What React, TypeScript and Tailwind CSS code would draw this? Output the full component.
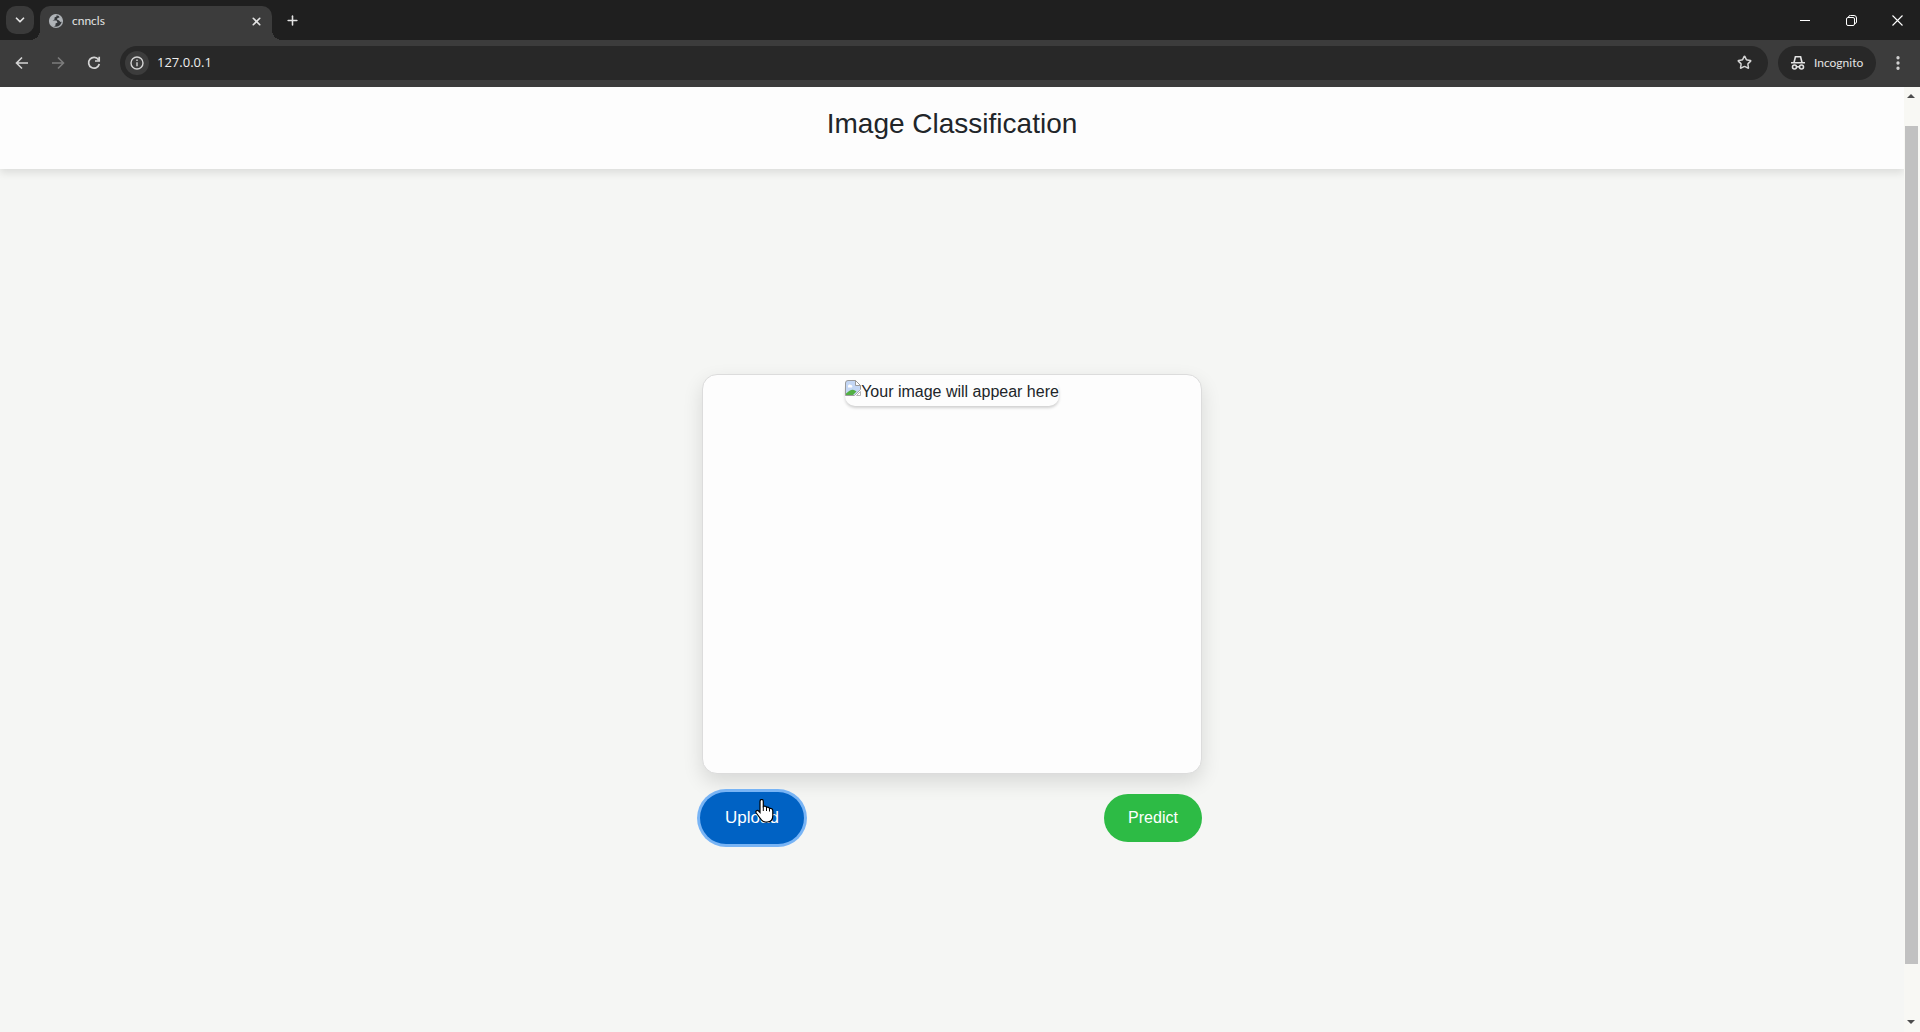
import React from "react";
import { ChevronDown, X, Plus, Star, EllipsisVertical } from "lucide-react";

function TabStrip() {
  return (
    <div className="flex h-10 items-end bg-[#1f1f1f] pl-1.5 text-[#e3e3e3]">
      <button aria-label="Search tabs" className="mb-1.5 grid h-7 w-7 place-items-center rounded-[10px] bg-[#3a3a3a]">
        <ChevronDown size={14} strokeWidth={3} />
      </button>
      <div className="relative ml-1.5 flex h-[34px] w-[232px] items-center rounded-t-[10px] bg-[#3c3c3c] pr-2 pb-1 pl-2">
        <i className="absolute bottom-0 -left-2.5 h-2.5 w-2.5 bg-[radial-gradient(circle_at_0_0,transparent_10px,#3c3c3c_10px)]" />
        <i className="absolute -right-2.5 bottom-0 h-2.5 w-2.5 bg-[radial-gradient(circle_at_100%_0,transparent_10px,#3c3c3c_10px)]" />
        <svg width="16" height="16" viewBox="0 0 16 16" aria-hidden="true">
          <circle cx="8" cy="8" r="6.4" fill="#34373a" stroke="#a9adb1" strokeWidth="1.400" />
          <path d="M1.500 8C1.500 4 4.500 1.500 8.500 1.500V3.500L6.500 4.500V6.500L4.500 7.500H8.500L9.500 9.500 7.500 10.500V12.500L5.500 13.500C3 12.500 1.500 10.500 1.500 8Z" fill="#b0b4b8" />
          <path d="M11 2.500C13.500 4 14.500 6 14.500 8.500L12.500 9 11 7.500 9 6.500 9.500 5 11.500 4.500Z" fill="#b0b4b8" />
        </svg>
        <span className="ml-2 flex-1 font-[Lato,sans-serif] text-xs">cnncls</span>
        <button aria-label="Close tab" className="grid h-4 w-4 place-items-center">
          <X size={13} strokeWidth={3} />
        </button>
      </div>
      <button aria-label="New tab" className="mb-1.5 ml-1.5 grid h-7 w-7 place-items-center">
        <Plus size={15} strokeWidth={2.5} />
      </button>
      <div className="ml-auto flex h-10 items-center">
        <button aria-label="Minimize" className="grid h-10 w-[46px] place-items-center">
          <svg width="10" height="10" viewBox="0 0 10 10" stroke="#fff"><path d="M0 5.5h10" /></svg>
        </button>
        <button aria-label="Restore" className="grid h-10 w-[46px] place-items-center">
          <svg width="11" height="11" viewBox="0 0 11 11" fill="none" stroke="#fff">
            <rect x="0.500" y="2.500" width="8" height="8" rx="1.500" />
            <path d="M2.500 2.500V2Q2.500 .5 4.500 .5H8Q10.500 .5 10.500 3V7Q10.500 8.500 8.500 8.500" />
          </svg>
        </button>
        <button aria-label="Close" className="grid h-10 w-[46px] place-items-center">
          <svg width="11" height="11" viewBox="0 0 11 11" stroke="#fff" strokeWidth="1.100"><path d="M.5.5l10 10M10.500.5l-10 10" /></svg>
        </button>
      </div>
    </div>
  );
}

function Toolbar() {
  return (
    <div className="flex h-[47px] items-center bg-[#3c3c3c] pr-3 pb-0.5 pl-3 text-[#d4d4d4]">
      <button aria-label="Back" className="grid h-5 w-5 place-items-center">
        <svg width="20" height="20" viewBox="0 0 20 20" fill="none" stroke="currentColor" strokeWidth="1.600"><path d="M16 10H5M10 4.500 4.500 10l5.500 5.500" /></svg>
      </button>
      <button aria-label="Forward" className="ml-4 grid h-5 w-5 place-items-center text-[#7c7c7c]">
        <svg width="20" height="20" viewBox="0 0 20 20" fill="none" stroke="currentColor" strokeWidth="1.600"><path d="M4 10h11M10 4.500 15.500 10 10 15.500" /></svg>
      </button>
      <button aria-label="Reload" className="ml-4 grid h-5 w-5 place-items-center">
        <svg width="20" height="20" viewBox="0 0 20 20" fill="none" stroke="currentColor" strokeWidth="1.700"><path d="M14.500 6.700A5.400 5.400 0 1 0 15.300 11M15.200 3.800v4.200H11" /></svg>
      </button>
      <div className="ml-4 flex h-[34px] flex-1 items-center rounded-full bg-[#282828] pr-3.5 pl-[5px]">
        <button aria-label="Site information" className="grid h-6 w-6 place-items-center rounded-full bg-[#3c3c3c]">
          <svg width="14" height="14" viewBox="0 0 14 14" fill="none" stroke="currentColor" strokeWidth="1.400">
            <circle cx="7" cy="7" r="6" /><path d="M7 6.200v4M7 3.600v1.500" />
          </svg>
        </button>
        <input aria-label="Address" defaultValue="127.0.0.1" className="ml-2 min-w-0 flex-1 bg-transparent font-['Open_Sans','Noto_Sans',sans-serif] text-[13px] text-[#ededed] outline-none" />
        <button aria-label="Bookmark this page" className="grid h-5 w-5 place-items-center">
          <Star size={15} strokeWidth={2.4} strokeLinejoin="miter" />
        </button>
      </div>
      <div className="ml-2.5 flex h-[34px] w-[98px] items-center gap-2 rounded-full bg-[#282828] pl-3 text-[#e3e3e3]">
        <svg className="shrink-0" width="16" height="16" viewBox="0 0 16 16" fill="none" stroke="currentColor" strokeWidth="1.600" aria-hidden="true">
          <path d="M1 7.800h14M4 7.500 5.400 1.800h5.200L12 7.500" />
          <circle cx="4.500" cy="12" r="2" /><circle cx="11.500" cy="12" r="2" /><path d="M6.500 11.800h3" />
        </svg>
        <span className="font-[Lato,sans-serif] text-xs">Incognito</span>
      </div>
      <button aria-label="Menu" className="ml-3 grid h-5 w-5 place-items-center">
        <EllipsisVertical size={18} strokeWidth={2.4} />
      </button>
    </div>
  );
}

function BrokenImage() {
  return (
    <svg width="16" height="16" viewBox="0 0 16 16" aria-hidden="true">
      <path d="M.5 3Q.5.500 3 .5H10.500l5 5v4L9.500 15.500H.5Z" fill="#c4d7f5" stroke="#9b9b9b" />
      <path d="M10.500.5v5h5Z" fill="#fff" stroke="#9b9b9b" />
      <path d="M3 6a1.800 1.800 0 0 1 3-1 1.500 1.500 0 0 1 1 2.500H3Z" fill="#fff" />
      <path d="M1 15v-1.500q5-5 8-3.500l2.500 1.500L8 15Z" fill="#52b043" />
      <path d="M16 9.500V16H9.500Z" fill="#fdfdfd" />
      <path d="M15.500 11.500v4h-4Z" fill="#fff" stroke="#b5b5b5" />
    </svg>
  );
}

function HandCursor() {
  return (
    <svg className="pointer-events-none absolute top-[7px] left-[55px]" width="19" height="24" viewBox="0 0 19 24" aria-hidden="true">
      <path d="M5 2.500C5-.2 8.300-.2 8.300 2.500V7.500C10 6.700 11.300 7.500 11.500 8.400 13 7.800 14.300 8.500 14.500 9.500 16.300 9 17.800 10 17.800 12V16.500C17.800 20.500 15.500 23 12 23H10.500C8 23 6.500 21.500 5 19L1.300 14C0 12 2.200 10.500 3.700 12L5 13.500Z" fill="#fff" stroke="#000" strokeWidth="1.200" />
      <path d="M8.300 7.500V12M11.500 8.500V12M14.500 9.500V12.500" stroke="#000" />
    </svg>
  );
}

function Scrollbar() {
  return (
    <div className="flex w-4 shrink-0 flex-col items-center bg-[#f8f8f4] pr-0.5" aria-hidden="true">
      <i className="mt-[7px] border-x-4 border-b-4 border-x-transparent border-b-[#4d4d4d]" />
      <div className="mt-7 mb-14 w-[13px] flex-1 bg-[#c1c1c1]" />
      <i className="mb-2 border-x-4 border-t-4 border-x-transparent border-t-[#4d4d4d]" />
    </div>
  );
}

export default function App() {
  return (
    <div className="flex min-h-screen flex-col font-['Noto_Sans','Open_Sans',sans-serif]">
      <TabStrip />
      <Toolbar />
      <div className="flex flex-1 font-['Liberation_Sans',Arial,sans-serif] text-[#212529]">
        <div className="flex flex-1 flex-col bg-[#f5f6f4]">
          <header className="flex h-[82px] items-start justify-center bg-[#fdfdfd] pt-5 shadow-[0_4px_8px_rgba(0,0,0,0.1)]">
            <h1 className="text-[28px] leading-[34px]">Image Classification</h1>
          </header>
          <main className="flex flex-1 flex-col items-center justify-center pt-4">
            <section className="flex h-[400px] w-[500px] items-start justify-center rounded-[15px] border border-[#dcdcdc] bg-[#fdfdfd] pt-[5px] shadow-[0_8px_20px_rgba(0,0,0,0.12)]">
              <div className="flex h-[26px] items-start rounded-[10px] shadow-[0_2px_3px_rgba(0,0,0,0.18)]">
                <BrokenImage />
                <span className="text-base leading-6">Your image will appear here</span>
              </div>
            </section>
            <div className="mt-[18px] flex w-[504px] items-center justify-between pr-0.5">
              <button className="relative h-[52px] w-[104px] rounded-full bg-[#0062c4] text-[17px] text-white ring-[3px] ring-[#78b4f5]">
                Upload
                <HandCursor />
              </button>
              <button className="h-12 w-[98px] rounded-full bg-[#2dbb45] text-base text-white">Predict</button>
            </div>
          </main>
        </div>
        <Scrollbar />
      </div>
    </div>
  );
}
